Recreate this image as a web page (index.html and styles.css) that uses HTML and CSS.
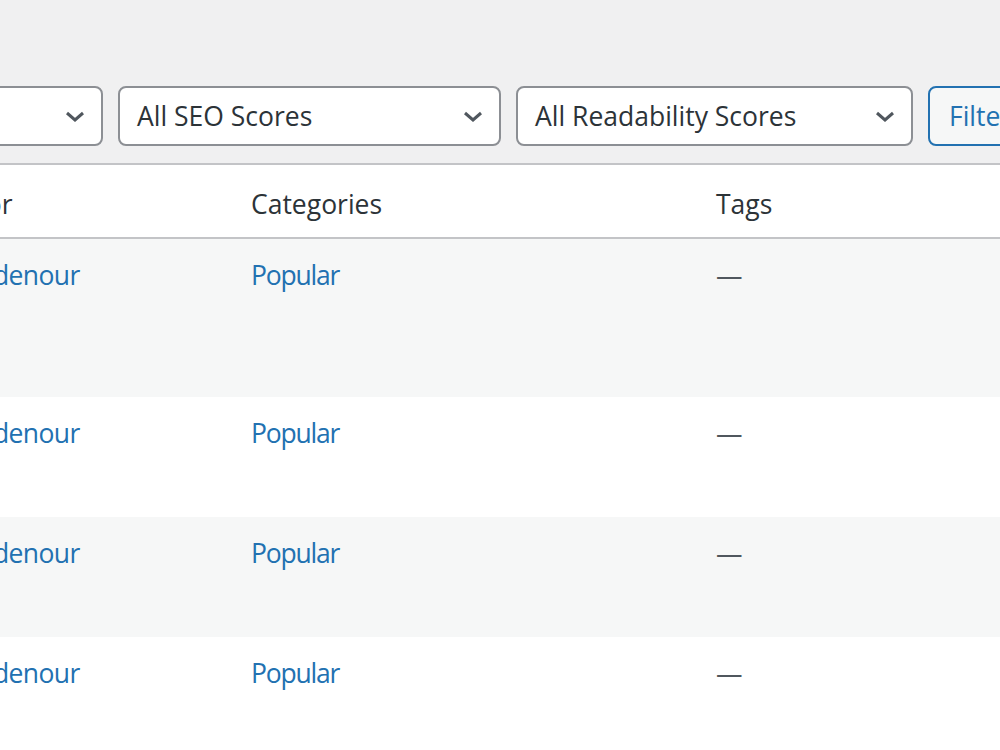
FILE: index.html
```
<!doctype html>
<html>
<head>
<meta charset="utf-8">
<title>Posts</title>
<link rel="stylesheet" href="styles.css">
</head>
<body>
	<div class="wrap">
		<div class="tablenav">
			<div class="select sel-date"><span>All dates</span><svg class="chev" viewBox="0 0 20 11"><polyline points="2,2 10,9 18,2"/></svg></div>
			<div class="select sel-cat"><span>All Categories</span><svg class="chev" viewBox="0 0 20 11"><polyline points="2,2 10,9 18,2"/></svg></div>
			<div class="select sel-seo"><span>All SEO Scores</span><svg class="chev" viewBox="0 0 20 11"><polyline points="2,2 10,9 18,2"/></svg></div>
			<div class="select sel-read"><span>All Readability Scores</span><svg class="chev" viewBox="0 0 20 11"><polyline points="2,2 10,9 18,2"/></svg></div>
			<button class="button">Filter</button>
		</div>
		<table class="posts">
			<thead>
				<tr>
					<th class="col-title">Title</th>
					<th class="col-author">Author</th>
					<th class="col-cat">Categories</th>
					<th class="col-tags">Tags</th>
					<th class="col-date">Date</th>
				</tr>
			</thead>
			<tbody>
				<tr class="tall alt">
					<td><a href="#">Summer recipes</a></td>
					<td><a class="author" href="#">Al Madenour</a></td>
					<td><a class="cat" href="#">Popular</a></td>
					<td class="dash">—</td>
					<td>Published</td>
				</tr>
				<tr>
					<td><a href="#">Weekend trips</a></td>
					<td><a class="author" href="#">Al Madenour</a></td>
					<td><a class="cat" href="#">Popular</a></td>
					<td class="dash">—</td>
					<td>Published</td>
				</tr>
				<tr class="alt">
					<td><a href="#">Garden notes</a></td>
					<td><a class="author" href="#">Al Madenour</a></td>
					<td><a class="cat" href="#">Popular</a></td>
					<td class="dash">—</td>
					<td>Published</td>
				</tr>
				<tr>
					<td><a href="#">City guide</a></td>
					<td><a class="author" href="#">Al Madenour</a></td>
					<td><a class="cat" href="#">Popular</a></td>
					<td class="dash">—</td>
					<td>Published</td>
				</tr>
			</tbody>
		</table>
	</div>
</body>
</html>
```
FILE: styles.css
```
body{
	margin: 0;
	background: #f0f0f1;
	overflow: hidden;
	font-family: "Open Sans", "Noto Sans", sans-serif;
	font-size: 26.5px;
	color: #3c434a;
}
.wrap{
	width: 1800px;
	margin-left: -460px;
}
.tablenav{
	display: flex;
	gap: 15px;
	padding: 86px 0 17px 15px;
}
.select{
	box-sizing: border-box;
	flex: none;
	height: 60px;
	display: flex;
	align-items: center;
	justify-content: space-between;
	padding: 0 16px 0 17px;
	background: #fff;
	border: 2px solid #8c8f94;
	border-radius: 8px;
	color: #2c3338;
	white-space: nowrap;
}
.sel-date{ width: 212px; }
.sel-cat{ width: 321px; }
.sel-seo{ width: 383px; }
.sel-read{ width: 397px; }
.chev{
	width: 20px;
	height: 11px;
	flex: none;
}
.chev polyline{
	fill: none;
	stroke: #50575e;
	stroke-width: 3;
}
.button{
	box-sizing: border-box;
	flex: none;
	height: 60px;
	padding: 0 19px;
	background: #f6f7f7;
	border: 2px solid #2271b1;
	border-radius: 8px;
	color: #2271b1;
	font: inherit;
	width: 140px;
	text-align: left;
}
.posts{
	width: 1800px;
	table-layout: fixed;
	border-collapse: collapse;
	background: #fff;
	border-top: 2px solid #c3c4c7;
}
.posts th{
	text-align: left;
	font-weight: 400;
	line-height: 37px;
	padding: 21px 20px 14px;
	color: #2c3338;
	border-bottom: 2px solid #c3c4c7;
}
.col-title{ width: 327px; }
.col-author{ width: 284px; }
.col-cat{ width: 425px; }
.col-tags{ width: 360px; }
.posts tbody tr{
	height: 120px;
}
.posts tbody tr.tall{
	height: 159px;
}
.posts tr.alt{
	background: #f6f7f7;
}
.posts td{
	vertical-align: top;
	line-height: 37px;
	padding: 18px 20px 12px;
	white-space: nowrap;
}
.posts a{
	color: #2271b1;
	text-decoration: none;
}
.posts a.author{
	letter-spacing: -0.6px;
}
.posts a.cat{
	letter-spacing: -1.2px;
}
.dash{
	color: #50575e;
}
```
